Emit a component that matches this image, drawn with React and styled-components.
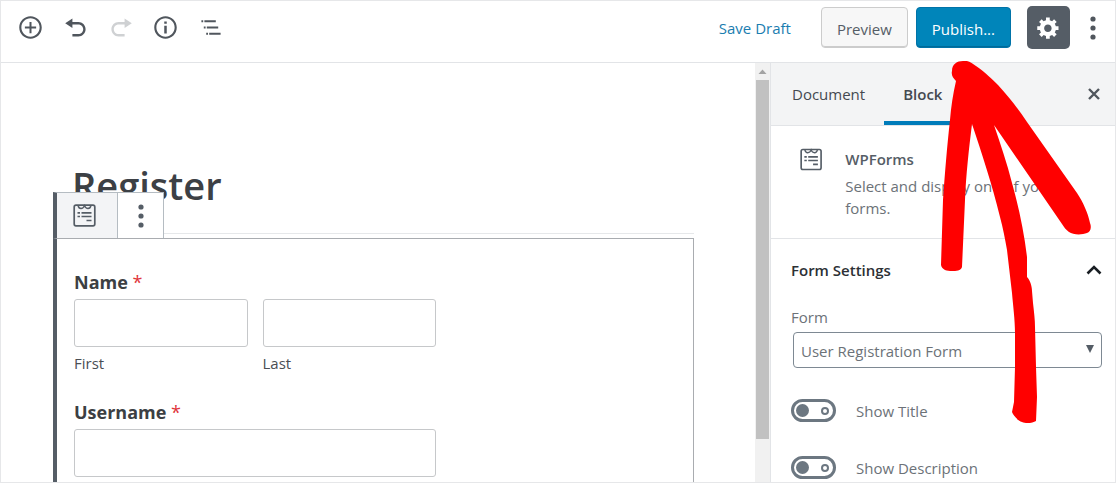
import React from 'react';
import styled, { createGlobalStyle, css } from 'styled-components';

const GlobalStyle = createGlobalStyle`
*, *::before, *::after {
  box-sizing: border-box;
}
body {
  margin: 0;
  background: #fff;
  color: #555d66;
  font-family: "Open Sans", "Noto Sans", sans-serif;
  font-size: 15px;
  line-height: 22px;
}
button, input, select {
  font: inherit;
  color: inherit;
  margin: 0;
}
`;

const Editor = styled.div`
position: relative;
display: flex;
flex-direction: column;
height: 100vh;
border: 1px solid #e6e7e9;
overflow: hidden;
`;

const Header = styled.header`
display: flex;
justify-content: space-between;
padding: 5px 8px 13px 7px;
border-bottom: 1px solid #e2e4e7;
`;

const Tools = styled.div`
display: flex;
align-items: center;
`;

const Actions = styled.div`
display: flex;
align-items: center;
gap: 8px;
`;

const IconButton = styled.button`
display: flex;
align-items: center;
justify-content: center;
width: ${(p) => p.$width || 45}px;
height: 43px;
padding: 0;
border: 0;
background: none;
color: ${(p) => (p.disabled ? '#cfd1d3' : '#50565d')};
`;

const LinkButton = styled.button`
padding: 0;
margin-right: 22px;
border: 0;
background: none;
color: #1a7db0;
`;

const Button = styled.button`
height: 41px;
padding: 3px 15px 0;
border: 1px solid #ccc;
border-radius: 4px;
background: #f7f7f7;
box-shadow: inset 0 -1px 0 #ccc;
color: #555d66;
${(p) =>
    p.$primary &&
    css`
border-color: #0073a8;
background: #0085ba;
box-shadow: inset 0 -1px 0 #006a98;
color: #fff;
font-weight: 500;
`}
`;

const SettingsButton = styled(IconButton)`
margin-left: 8px;
border-radius: 5px;
background: #555d66;
color: #fff;
`;

const Body = styled.div`
display: flex;
flex: 1;
min-height: 0;
`;

const Canvas = styled.main`
flex: 1;
min-width: 0;
padding: 94px 61px 0 52px;
overflow: hidden;
`;

const Title = styled.h1`
margin: 0 0 4px 4px;
padding: 0 0 20px 15px;
border-bottom: 1px solid #e6e8ea;
color: #3c4045;
font-size: 38px;
line-height: 56px;
font-weight: 600;
`;

const Block = styled.section`
position: relative;
height: 500px;
padding: 31px 17px;
border: 1px solid #a9acb0;
border-left: 4px solid #555d66;
`;

const BlockToolbar = styled.div`
position: absolute;
left: -4px;
bottom: 100%;
display: flex;
margin-bottom: 1px;
border: 1px solid #b5bcc2;
border-bottom: 0;
border-left: 4px solid #555d66;
background: #fff;
`;

const ToolbarButton = styled.button`
display: flex;
align-items: center;
justify-content: center;
width: ${(p) => (p.$active ? 61 : 45)}px;
height: 45px;
padding: ${(p) => (p.$active ? '0 5px 0 0' : '0')};
border: 0;
border-right: ${(p) => (p.$active ? '1px solid #b5bcc2' : '0')};
background: ${(p) => (p.$active ? '#f3f4f6' : '#fff')};
color: #555d66;
`;

const Fieldset = styled.fieldset`
max-width: 362px;
margin: 0 0 26px;
padding: 0;
border: 0;
`;

const fieldName = css`
display: block;
padding: 0;
margin-bottom: 5px;
color: #3c3f43;
font-size: 18px;
line-height: 24px;
font-weight: 700;
`;

const Legend = styled.legend`
${fieldName}
`;

const FieldLabel = styled.label`
${fieldName}
`;

const Required = styled.span`
color: #e0343a;
font-weight: 400;
`;

const NameRow = styled.div`
display: grid;
grid-template-columns: 1fr 1fr;
gap: 15px;
`;

const TextInput = styled.input`
display: block;
width: 100%;
height: 48px;
padding: 0 12px;
border: 1px solid #c6c8ca;
border-radius: 3px;
background: #fff;
`;

const SubLabel = styled.label`
display: block;
padding-top: 5px;
color: #4a4e54;
`;

const Scrollbar = styled.div`
display: flex;
flex-direction: column;
width: 16px;
border-right: 1px solid #e2e4e7;
background: #f1f1f1;
`;

const ScrollArrow = styled.svg`
display: block;
width: 15px;
height: 17px;
`;

const ScrollThumb = styled.div`
height: 359px;
margin: 0 1px;
background: #c1c1c1;
`;

const Sidebar = styled.aside`
flex: 0 0 344px;
background: #fff;
overflow: hidden;
`;

const Tabs = styled.div`
display: flex;
height: 63px;
padding: 0 1px 0 2px;
border-bottom: 1px solid #e2e4e7;
background: #f3f4f5;
`;

const Tab = styled.button`
height: 62px;
padding: 3px 19px 0;
border: 0;
border-bottom: 4px solid ${(p) => (p.$active ? '#007cba' : 'transparent')};
background: none;
color: #444950;
font-weight: ${(p) => (p.$active ? 600 : 400)};
`;

const CloseButton = styled(IconButton)`
height: 62px;
margin-left: auto;
`;

const Card = styled.div`
display: flex;
gap: 23px;
padding: 22px 20px 19px 29px;
border-bottom: 1px solid #e2e4e7;
`;

const CardTitle = styled.h2`
margin: 0 0 5px;
font-size: 15px;
line-height: 22px;
font-weight: 600;
`;

const CardText = styled.p`
margin: 0;
color: #6c7278;
`;

const Panel = styled.section`
padding: 20px 13px 0 20px;
`;

const PanelHeading = styled.h2`
margin: 0;
`;

const PanelToggle = styled.button`
display: flex;
align-items: center;
justify-content: space-between;
width: 100%;
padding: 0;
border: 0;
background: none;
color: #2c3035;
font-size: 15px;
line-height: 22px;
font-weight: 600;
`;

const Caption = styled.label`
display: block;
margin: 25px 0 4px;
color: #6c7278;
`;

const SelectWrap = styled.div`
position: relative;
margin: 0 0 31px 2px;
`;

const Select = styled.select`
display: block;
width: 100%;
height: 36px;
padding: 2px 24px 0 7px;
border: 1px solid #7e8993;
border-radius: 4px;
appearance: none;
background: #fff;
color: #6c7278;
`;

const SelectArrow = styled.svg`
position: absolute;
top: 13px;
right: 8px;
pointer-events: none;
`;

const ToggleRow = styled.div`
display: flex;
align-items: center;
gap: 20px;
margin-bottom: 34px;
color: #6c7278;
`;

const Switch = styled.input`
display: flex;
align-items: center;
justify-content: space-between;
width: 45px;
height: 23px;
padding: 0 4px 0 2px;
border: 3px solid #6c7781;
border-radius: 12px;
appearance: none;
background: #fff;
&::before {
  content: "";
  width: 13px;
  height: 13px;
  border-radius: 50%;
  background: #6c7781;
}
&::after {
  content: "";
  width: 8px;
  height: 8px;
  border: 2px solid #6c7781;
  border-radius: 50%;
}
`;

const PointerArrow = styled.svg`
position: absolute;
top: 60px;
right: 23px;
pointer-events: none;
`;

const circle =
  'M10 1c-5 0-9 4-9 9s4 9 9 9 9-4 9-9-4-9-9-9zm0 16.300c-4 0-7.300-3.300-7.300-7.300s3.300-7.300 7.300-7.300 7.300 3.300 7.300 7.300-3.300 7.300-7.300 7.300z';

const paths = {
  add: circle + 'M10.800 5.500H9.200v3.700H5.500v1.600h3.700v3.700h1.600v-3.700h3.700V9.200h-3.700z',
  undo: 'M12 5H7V2L1 6l6 4V7h5c2.200 0 4 1.800 4 4s-1.800 4-4 4H7v2h5c3.300 0 6-2.700 6-6s-2.700-6-6-6z',
  redo: 'M8 5h5V2l6 4-6 4V7H8c-2.200 0-4 1.800-4 4s1.800 4 4 4h5v2H8c-3.300 0-6-2.700-6-6s2.700-6 6-6z',
  info: circle + 'M9 5.200h2v1.800H9zM9 8.500h2v6.300H9z',
  outline: 'M2 3.500h1.500v1.700H2zM4.500 3.500H14v1.700H4.500zM4 8.700h1.500v1.700H4zM6.500 8.700H16v1.700H6.500zM6 13.900h1.500v1.700H6zM8.500 13.900H18v1.700H8.500z',
  gear: 'M18 12h-2.180c-.17.7-.44 1.350-.81 1.930l1.540 1.540-2.100 2.100-1.540-1.540c-.58.36-1.230.63-1.910.79V19H8v-2.180c-.68-.16-1.330-.43-1.910-.79l-1.540 1.540-2.120-2.120 1.540-1.540c-.36-.58-.63-1.230-.79-1.910H1V9.030h2.170c.16-.7.44-1.350.8-1.940L2.430 5.550l2.100-2.100 1.540 1.540c.58-.37 1.240-.64 1.930-.81V2h3v2.180c.68.16 1.330.43 1.910.79l1.540-1.540 2.120 2.120-1.540 1.540c.36.59.64 1.240.8 1.940H18V12zm-8.500 1.500c1.660 0 3-1.340 3-3s-1.340-3-3-3-3 1.340-3 3 1.340 3 3 3z',
};

const Icon = ({ name, size = 24 }) => (
  <svg width={size} height={size} viewBox="0 0 20 20" fill="currentColor">
    <path d={paths[name]} />
  </svg>
);

const Dots = () => (
  <svg width="8" height="26" viewBox="0 0 8 26" fill="currentColor">
    <circle cx="4" cy="4" r="2.600" />
    <circle cx="4" cy="13" r="2.600" />
    <circle cx="4" cy="22" r="2.600" />
  </svg>
);

const FormIcon = () => (
  <svg width="23" height="23" viewBox="0 0 23 23" fill="none" stroke="currentColor">
    <rect x="1.200" y="1.200" width="20.600" height="20.600" rx="1.800" strokeWidth="1.700" />
    <path d="M5 1.500c.5 2.200 1.500 3 3 3s2.800-1 3.500-2.700c.7 1.700 2 2.700 3.500 2.700s2.500-.8 3-3" strokeWidth="1.400" />
    <path d="M4.500 8.800h2.500M8.500 8.800h10M4.500 12.500h2.500M8.500 12.500h10M13.500 16.500h5" strokeWidth="1.700" />
  </svg>
);

const toggles = [
  { id: 'show-title', label: 'Show Title' },
  { id: 'show-description', label: 'Show Description' },
];

const App = () => {
  return (
    <Editor>
      <GlobalStyle />
      <Header>
        <Tools>
          <IconButton aria-label="Add block"><Icon name="add" size={25} /></IconButton>
          <IconButton aria-label="Undo"><Icon name="undo" /></IconButton>
          <IconButton aria-label="Redo" disabled><Icon name="redo" /></IconButton>
          <IconButton aria-label="Content structure"><Icon name="info" size={25} /></IconButton>
          <IconButton aria-label="Block navigation"><Icon name="outline" /></IconButton>
        </Tools>
        <Actions>
          <LinkButton>Save Draft</LinkButton>
          <Button>Preview</Button>
          <Button $primary>Publish...</Button>
          <SettingsButton $width={43} aria-label="Settings"><Icon name="gear" size={25} /></SettingsButton>
          <IconButton $width={29} aria-label="More tools"><Dots /></IconButton>
        </Actions>
      </Header>

      <Body>
        <Canvas>
          <Title>Register</Title>
          <Block>
            <BlockToolbar>
              <ToolbarButton $active aria-label="WPForms"><FormIcon /></ToolbarButton>
              <ToolbarButton aria-label="More options"><Dots /></ToolbarButton>
            </BlockToolbar>
            <Fieldset>
              <Legend>Name <Required>*</Required></Legend>
              <NameRow>
                <div>
                  <TextInput id="first" type="text" />
                  <SubLabel htmlFor="first">First</SubLabel>
                </div>
                <div>
                  <TextInput id="last" type="text" />
                  <SubLabel htmlFor="last">Last</SubLabel>
                </div>
              </NameRow>
            </Fieldset>
            <Fieldset as="div">
              <FieldLabel htmlFor="username">Username <Required>*</Required></FieldLabel>
              <TextInput id="username" type="text" />
            </Fieldset>
          </Block>
        </Canvas>

        <Scrollbar>
          <ScrollArrow viewBox="0 0 15 17">
            <path d="M3.500 11L7.500 6.500 11.500 11z" fill="#a3a3a3" />
          </ScrollArrow>
          <ScrollThumb />
        </Scrollbar>

        <Sidebar>
          <Tabs>
            <Tab>Document</Tab>
            <Tab $active>Block</Tab>
            <CloseButton $width={40} aria-label="Close settings">
              <svg width="12" height="12" viewBox="0 0 12 12" stroke="currentColor" strokeWidth="2.400">
                <path d="M1 1l10 10M11 1L1 11" />
              </svg>
            </CloseButton>
          </Tabs>
          <Card>
            <FormIcon />
            <div>
              <CardTitle>WPForms</CardTitle>
              <CardText>Select and display one of your forms.</CardText>
            </div>
          </Card>
          <Panel>
            <PanelHeading>
              <PanelToggle aria-expanded="true">
                Form Settings
                <svg width="16" height="10" viewBox="0 0 16 10" fill="none" stroke="#191e23" strokeWidth="2.600">
                  <path d="M1.500 8.500L8 2l6.500 6.500" />
                </svg>
              </PanelToggle>
            </PanelHeading>
            <Caption htmlFor="form">Form</Caption>
            <SelectWrap>
              <Select id="form">
                <option>User Registration Form</option>
              </Select>
              <SelectArrow width="8" height="8" viewBox="0 0 8 8">
                <path d="M0 0h8L4 8z" fill="#555d66" />
              </SelectArrow>
            </SelectWrap>
            {toggles.map((t) => (
              <ToggleRow key={t.id}>
                <Switch type="checkbox" id={t.id} />
                <label htmlFor={t.id}>{t.label}</label>
              </ToggleRow>
            ))}
          </Panel>
        </Sidebar>
      </Body>

      {/* hand drawn arrow pointing at the publish button */}
      <PointerArrow width="152" height="364" viewBox="940 61 152 364">
        <path
          fill="#f00"
          d="M952 71C952 64 957 61 963 61C968 60 972 63 976 66C986 73 992 79 998 85C1009 97 1019 110 1027 122L1077 193C1083 202 1088 213 1090 223C1092 228 1090 232 1087 233C1082 235 1073 235 1069 232C1066 230 1064 227 1062 224L994 125C1000 143 1007 163 1012 183C1019 208 1024 232 1027 257L1027 277C1030 280 1032 286 1032 291L1033 303C1034 312 1035 320 1035 327L1036 367L1037 397L1036 421C1033 423 1026 424 1022 422C1018 421 1013 415 1012 412L1014 402L1015 367L1015 333C1015 320 1013 305 1012 293L1007 250C1005 239 1003 228 1000 217C992 184 982 154 972 124C969 148 966 175 965 200L962 267C961 271 956 271 952 271C947 271 942 270 941 265L943 200C945 172 947 147 950 120C951 107 953 94 956 81C953 78 951 75 952 71Z"
        />
      </PointerArrow>
    </Editor>
  );
};

export default App;
